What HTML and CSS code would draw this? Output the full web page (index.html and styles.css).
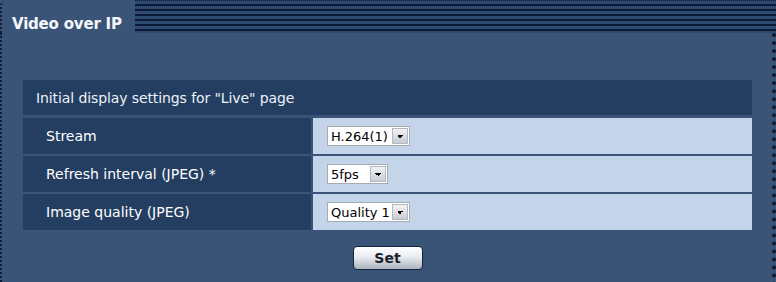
FILE: index.html
```html
<!DOCTYPE html>
<html lang="en">
<head>
    <meta charset="UTF-8">
    <title>Video over IP</title>
    <link rel="stylesheet" href="styles.css">
</head>
<body>
    <div class="tabbar">
        <div class="tab">Video over IP</div>
        <div class="stripes"></div>
    </div>
    <div class="panel">
        <div class="settings">
            <div class="caption">Initial display settings for "Live" page</div>

            <div class="label">Stream</div>
            <div class="value">
                <span class="combo"><select class="wide"><option>H.264(1)</option></select></span>
            </div>

            <div class="label">Refresh interval (JPEG) *</div>
            <div class="value">
                <span class="combo"><select class="narrow"><option>5fps</option></select></span>
            </div>

            <div class="label">Image quality (JPEG)</div>
            <div class="value">
                <span class="combo"><select class="wide"><option>Quality 1</option></select></span>
            </div>
        </div>
        <div class="actions">
            <button class="btn">Set</button>
        </div>
    </div>
</body>
</html>
```

FILE: styles.css
```css
body {
    margin: 0;
    background: #395377;
    font-family: "DejaVu Sans", Verdana, sans-serif;
    font-size: 14px;
    color: #fff;
    overflow: hidden;
}
.tabbar {
    display: flex;
    height: 33px;
}
.tab {
    width: 135px;
    margin-top: 1px;
    padding: 14px 0 0 10px;
    box-sizing: border-box;
    background: #3a5478;
    border-left: 2px dotted #0c1a34;
    border-top-left-radius: 5px;
    font-size: 15px;
    font-weight: bold;
    letter-spacing: -0.2px;
    color: #f4f6fa;
}
.stripes {
    flex: 1;
    border-top: 1px dotted #0c1a34;
    background: repeating-linear-gradient(to bottom, #2f4a70 0, #2f4a70 3px, #0b1936 3px, #0b1936 5px);
    background-size: 100% 30px;
    background-repeat: no-repeat;
    background-color: #2f4a70;
}
.panel {
    background: #3a5478;
    border-left: 2px dotted #0c1a34;
    border-right: 4px dotted #0c1a34;
    padding: 47px 20px 40px 21px;
}
.settings {
    display: grid;
    grid-template-columns: 288px 1fr;
    grid-auto-rows: 36px;
    gap: 2px;
}
.caption {
    grid-column: 1 / 3;
    height: 35px;
    background: #233e61;
    padding: 0 13px;
    display: flex;
    align-items: center;
    color: #eef2f8;
    letter-spacing: -0.1px;
}
.label {
    background: #233e61;
    padding-left: 23px;
    display: flex;
    align-items: center;
}
.value {
    background: #c4d4e9;
    padding-left: 14px;
    display: flex;
    align-items: center;
}
.combo {
    position: relative;
    display: inline-block;
}
.combo select {
    appearance: none;
    -webkit-appearance: none;
    height: 20px;
    border: 1px solid #a6acb5;
    background: #fff;
    font-family: "DejaVu Sans", Verdana, sans-serif;
    font-size: 13px;
    color: #000;
    padding: 0 18px 0 3px;
    border-radius: 0;
}
.combo select.wide { width: 83px; }
.combo select.narrow { width: 61px; }
.combo::after {
    content: "";
    position: absolute;
    right: 2px;
    top: 2px;
    width: 14px;
    height: 14px;
    border: 1px solid #b4b8c0;
    background:
        linear-gradient(45deg, transparent 50%, #000 50%) no-repeat,
        linear-gradient(-45deg, transparent 50%, #000 50%) no-repeat,
        linear-gradient(to bottom, #f2f3f5, #c8ccd3);
    background-size: 3px 3px, 3px 3px, 100% 100%;
    background-position: 4px 6px, 7px 6px, 0 0;
    pointer-events: none;
}
.actions {
    margin-top: 16px;
    text-align: center;
}
.btn {
    width: 70px;
    height: 24px;
    border: 1px solid #15243b;
    border-radius: 4px;
    background: linear-gradient(to bottom, #ffffff 0%, #e9ecf0 45%, #aab3c0 100%);
    font-family: "DejaVu Sans", Verdana, sans-serif;
    font-size: 14px;
    font-weight: bold;
    color: #1d2430;
    cursor: pointer;
}
```
